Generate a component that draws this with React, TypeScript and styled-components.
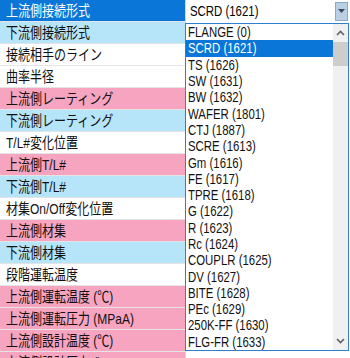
import React from "react";
import styled, { createGlobalStyle } from "styled-components";

const GlobalStyle = createGlobalStyle`
  html, body {
    margin: 0;
    padding: 0;
    background: #ffffff;
  }
  body {
    font-family: "Liberation Sans", "Noto Sans CJK JP", sans-serif;
    overflow: hidden;
  }
`;

type Tone = "selected" | "blue" | "pink" | "white";

const toneBg: Record<Tone, string> = {
  selected: "#0a76d8",
  blue: "#b6e4f9",
  pink: "#f7a4c1",
  white: "#ffffff",
};

const Sheet = styled.div`
  position: relative;
  width: 350px;
  height: 358px;
  display: grid;
  grid-template-columns: 185px 165px;
  overflow: hidden;
`;

const LabelColumn = styled.div`
  display: flex;
  flex-direction: column;
`;

const LabelRow = styled.div<{ $tone: Tone }>`
  height: 21px;
  flex: 0 0 21px;
  border-bottom: 1px solid #e4e4e4;
  background: ${(p) => toneBg[p.$tone]};
  color: ${(p) => (p.$tone === "selected" ? "#ffffff" : "#111111")};
  display: flex;
  align-items: center;
  padding-left: 6px;
  overflow: hidden;
`;

const Squeezed = styled.span<{ $scale?: number }>`
  display: inline-block;
  white-space: nowrap;
  font-size: 15px;
  line-height: 16px;
  transform: scaleX(${(p) => p.$scale ?? 0.8});
  transform-origin: left center;
`;

const ValueColumn = styled.div`
  display: flex;
  flex-direction: column;
  border-left: 1px solid #d8d8d8;
`;

const Combo = styled.div`
  height: 22px;
  display: flex;
  align-items: center;
  justify-content: space-between;
  padding-left: 4px;
  padding-right: 2px;
  background: #ffffff;
`;

const DropButton = styled.div`
  width: 11px;
  height: 17px;
  background: #b9cfe4;
  border: 1px solid #86a9cc;
  display: flex;
  align-items: center;
  justify-content: center;
`;

const ListBox = styled.div`
  position: absolute;
  left: 185px;
  top: 23px;
  width: 162px;
  height: 326px;
  border: 1px solid #2f7fd0;
  background: #ffffff;
  display: flex;
`;

const Items = styled.div`
  flex: 1;
  display: flex;
  flex-direction: column;
  overflow: hidden;
`;

const Item = styled.div<{ $active?: boolean }>`
  height: 16.3px;
  flex: 0 0 16.3px;
  display: flex;
  align-items: center;
  padding-left: 2px;
  background: ${(p) => (p.$active ? "#0a76d8" : "transparent")};
  color: ${(p) => (p.$active ? "#ffffff" : "#111111")};
`;

const ScrollBar = styled.div`
  width: 15px;
  background: #f0f0f0;
  display: flex;
  flex-direction: column;
  align-items: center;
`;

const ArrowCell = styled.div`
  height: 18px;
  width: 15px;
  display: flex;
  align-items: center;
  justify-content: center;
`;

const Thumb = styled.div`
  width: 15px;
  height: 24px;
  background: #cdcdcd;
`;

const Track = styled.div`
  flex: 1;
`;

const labels: { text: string; tone: Tone }[] = [
  { text: "上流側接続形式", tone: "selected" },
  { text: "下流側接続形式", tone: "blue" },
  { text: "接続相手のライン", tone: "white" },
  { text: "曲率半径", tone: "white" },
  { text: "上流側レーティング", tone: "pink" },
  { text: "下流側レーティング", tone: "blue" },
  { text: "T/L#変化位置", tone: "white" },
  { text: "上流側T/L#", tone: "pink" },
  { text: "下流側T/L#", tone: "blue" },
  { text: "材集On/Off変化位置", tone: "white" },
  { text: "上流側材集", tone: "pink" },
  { text: "下流側材集", tone: "blue" },
  { text: "段階運転温度", tone: "white" },
  { text: "上流側運転温度 (℃)", tone: "pink" },
  { text: "上流側運転圧力 (MPaA)", tone: "pink" },
  { text: "上流側設計温度 (℃)", tone: "pink" },
  { text: "上流側設計圧力 ()", tone: "pink" },
];

const options = [
  "FLANGE (0)",
  "SCRD (1621)",
  "TS (1626)",
  "SW (1631)",
  "BW (1632)",
  "WAFER (1801)",
  "CTJ (1887)",
  "SCRE (1613)",
  "Gm (1616)",
  "FE (1617)",
  "TPRE (1618)",
  "G (1622)",
  "R (1623)",
  "Rc (1624)",
  "COUPLR (1625)",
  "DV (1627)",
  "BITE (1628)",
  "PEc (1629)",
  "250K-FF (1630)",
  "FLG-FR (1633)",
];

const Caret = ({ up }: { up?: boolean }) => (
  <svg width="9" height="6" viewBox="0 0 9 6">
    <path
      d={up ? "M1 5 L4.5 1.5 L8 5" : "M1 1 L4.5 4.5 L8 1"}
      fill="none"
      stroke="#606060"
      strokeWidth="1.6"
    />
  </svg>
);

const App: React.FC = () => {
  const selected = "SCRD (1621)";
  return (
    <>
      <GlobalStyle />
      <Sheet>
        <LabelColumn>
          {labels.map((l) => (
            <LabelRow key={l.text} $tone={l.tone}>
              <Squeezed>{l.text}</Squeezed>
            </LabelRow>
          ))}
        </LabelColumn>
        <ValueColumn>
          <Combo>
            <Squeezed $scale={0.76}>{selected}</Squeezed>
            <DropButton>
              <svg width="7" height="4" viewBox="0 0 7 4">
                <path d="M0 0 L7 0 L3.5 4 Z" fill="#3a4a5a" />
              </svg>
            </DropButton>
          </Combo>
        </ValueColumn>
        <ListBox>
          <Items>
            {options.map((o) => (
              <Item key={o} $active={o === selected}>
                <Squeezed $scale={0.76}>{o}</Squeezed>
              </Item>
            ))}
          </Items>
          <ScrollBar>
            <ArrowCell>
              <Caret up />
            </ArrowCell>
            <Thumb />
            <Track />
            <ArrowCell>
              <Caret />
            </ArrowCell>
          </ScrollBar>
        </ListBox>
      </Sheet>
    </>
  );
};

export default App;
